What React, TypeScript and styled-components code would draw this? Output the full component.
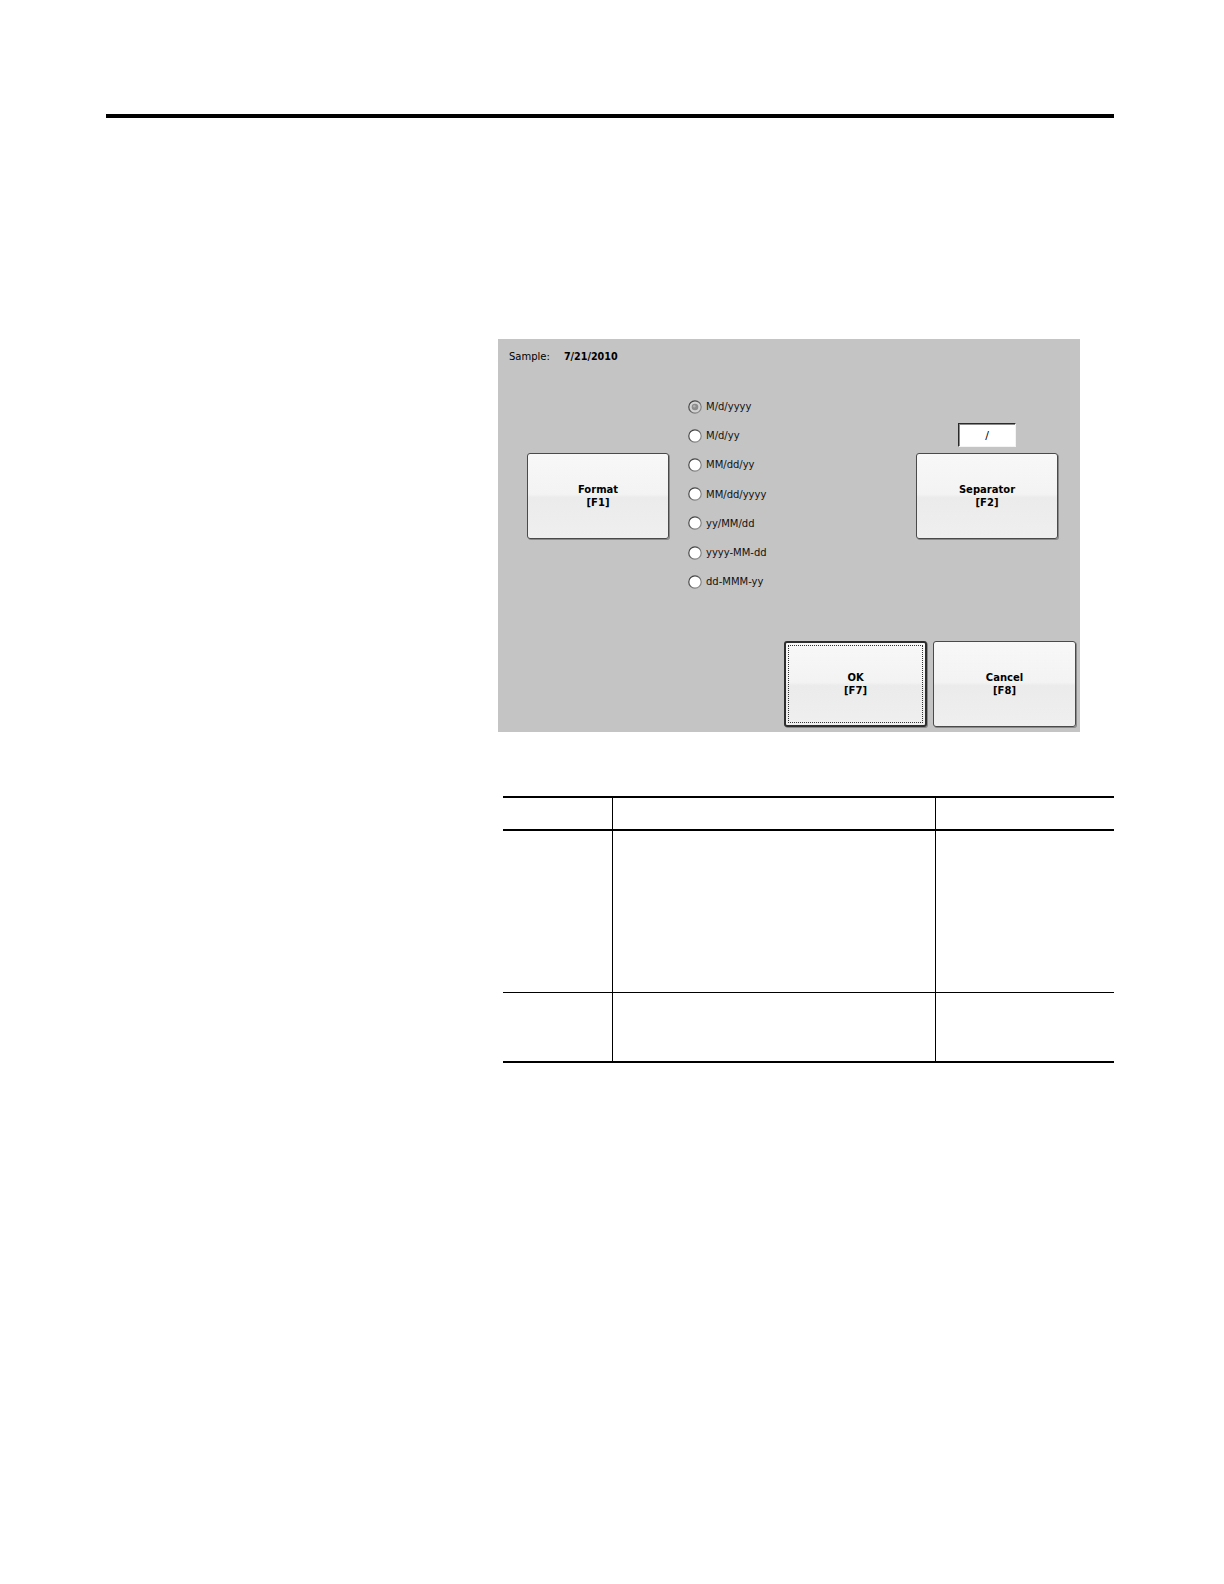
import React from "react";
import styled, { createGlobalStyle } from "styled-components";

const GlobalStyle = createGlobalStyle`
  html, body {
    margin: 0;
    padding: 0;
    background: #ffffff;
  }
  body {
    font-family: "DejaVu Sans", "Liberation Sans", sans-serif;
    color: #000;
  }
  * { box-sizing: border-box; }
`;

const Page = styled.div`
  width: 1008px;
  margin-left: 106px;
  padding-top: 114px;
  min-height: 1584px;
`;

const TopRule = styled.div`
  height: 4px;
  background: #000;
`;

const Content = styled.div`
  margin-left: 392px;
  margin-top: 221px;
  display: flex;
  flex-direction: column;
`;

const Panel = styled.div`
  width: 582px;
  height: 393px;
  background: #c4c4c4;
  display: flex;
  flex-direction: column;
  padding: 10px 4px 5px 11px;
`;

const SampleRow = styled.div`
  display: flex;
  align-items: center;
  gap: 14px;
  height: 16px;
  font-size: 10px;
  line-height: 16px;
`;

const SampleValue = styled.span`
  font-weight: bold;
  font-size: 9.6px;
`;

const Middle = styled.div`
  display: flex;
  align-items: flex-start;
`;

const FormatCol = styled.div`
  margin-left: 18px;
  margin-top: 88px;
`;

const Button = styled.div<{ $focused?: boolean; $w?: number }>`
  width: ${(p) => p.$w ?? 142}px;
  height: 86px;
  position: relative;
  border-radius: 3px;
  border: ${(p) => (p.$focused ? "2px solid #2e2e2e" : "1px solid #4a4a4a")};
  background: linear-gradient(
    to bottom,
    #f8f8f8 0%,
    #f3f3f3 48%,
    #ebebeb 52%,
    #efefef 100%
  );
  box-shadow: 1px 1px 0 #8a8a8a;
  display: flex;
  flex-direction: column;
  align-items: center;
  justify-content: center;
  font-weight: bold;
  font-size: 10px;
  line-height: 13px;
  text-align: center;
`;

const FocusRing = styled.div`
  position: absolute;
  inset: 2px;
  border: 1px dotted #333;
  pointer-events: none;
`;

const RadioList = styled.div`
  margin-left: 19px;
  margin-top: 27px;
  display: flex;
  flex-direction: column;
`;

const RadioRow = styled.div`
  height: 29.2px;
  display: flex;
  align-items: center;
  gap: 4px;
  font-size: 10px;
  color: #111;
`;

const SepCol = styled.div`
  margin-left: auto;
  margin-right: 18px;
  margin-top: 58px;
  display: flex;
  flex-direction: column;
  align-items: center;
  gap: 6px;
`;

const SepInput = styled.div`
  width: 58px;
  height: 24px;
  background: #fff;
  border-top: 1px solid #2a2a2a;
  border-left: 1px solid #2a2a2a;
  border-bottom: 1px solid #f4f4f4;
  border-right: 1px solid #f4f4f4;
  box-shadow: inset 1px 1px 0 #8a8a8a;
  display: flex;
  align-items: center;
  justify-content: center;
  font-size: 11px;
`;

const BottomRow = styled.div`
  margin-top: auto;
  display: flex;
  justify-content: flex-end;
  gap: 6px;
`;

const Table = styled.div`
  margin-left: 5px;
  margin-top: 64px;
  width: 611px;
  border-top: 2px solid #000;
  border-bottom: 2px solid #000;
`;

const Row = styled.div<{ $h: number; $line?: number }>`
  display: grid;
  grid-template-columns: 109px 323px 1fr;
  height: ${(p) => p.$h}px;
  border-bottom: ${(p) => (p.$line ? `${p.$line}px solid #000` : "none")};
`;

const Cell = styled.div<{ $divider?: boolean }>`
  border-left: ${(p) => (p.$divider ? "1px solid #000" : "none")};
`;

const Radio: React.FC<{ checked?: boolean }> = ({ checked }) => (
  <svg width="14" height="14" viewBox="0 0 14 14">
    <defs>
      <linearGradient id={checked ? "rgc" : "rgu"} x1="0" y1="0" x2="1" y2="1">
        <stop offset="0" stopColor="#2c2c2c" />
        <stop offset="1" stopColor="#9a9a9a" />
      </linearGradient>
    </defs>
    <circle
      cx="7"
      cy="7"
      r="6.2"
      fill={checked ? "#d2d2d2" : "#ffffff"}
      stroke={`url(#${checked ? "rgc" : "rgu"})`}
      strokeWidth="1.2"
    />
    {checked && <circle cx="7" cy="7" r="3.3" fill="#8c8c8c" />}
    {checked && <circle cx="6.3" cy="6.3" r="1.2" fill="#b0b0b0" />}
  </svg>
);

const formats = [
  "M/d/yyyy",
  "M/d/yy",
  "MM/dd/yy",
  "MM/dd/yyyy",
  "yy/MM/dd",
  "yyyy-MM-dd",
  "dd-MMM-yy",
];

export default function App() {
  return (
    <>
      <GlobalStyle />
      <Page>
        <TopRule />
        <Content>
          <Panel>
            <SampleRow>
              <span>Sample:</span>
              <SampleValue>7/21/2010</SampleValue>
            </SampleRow>
            <Middle>
              <FormatCol>
                <Button>
                  <span>Format</span>
                  <span>[F1]</span>
                </Button>
              </FormatCol>
              <RadioList>
                {formats.map((f, i) => (
                  <RadioRow key={f}>
                    <Radio checked={i === 0} />
                    <span>{f}</span>
                  </RadioRow>
                ))}
              </RadioList>
              <SepCol>
                <SepInput>/</SepInput>
                <Button>
                  <span>Separator</span>
                  <span>[F2]</span>
                </Button>
              </SepCol>
            </Middle>
            <BottomRow>
              <Button $focused $w={143}>
                <FocusRing />
                <span>OK</span>
                <span>[F7]</span>
              </Button>
              <Button $w={143}>
                <span>Cancel</span>
                <span>[F8]</span>
              </Button>
            </BottomRow>
          </Panel>
          <Table>
            <Row $h={33} $line={2}>
              <Cell />
              <Cell $divider />
              <Cell $divider />
            </Row>
            <Row $h={162} $line={1}>
              <Cell />
              <Cell $divider />
              <Cell $divider />
            </Row>
            <Row $h={68}>
              <Cell />
              <Cell $divider />
              <Cell $divider />
            </Row>
          </Table>
        </Content>
      </Page>
    </>
  );
}
